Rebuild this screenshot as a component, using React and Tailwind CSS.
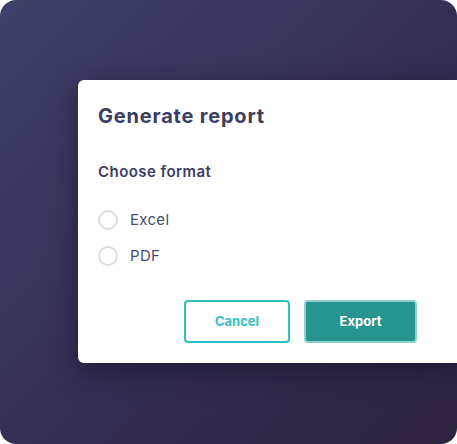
import React, { useState } from 'react';

const formats = ['Excel', 'PDF'];

export default function App() {
    const [format, setFormat] = useState(null);

    return (
        <div className="w-[457px] h-[444px] bg-white">
            <div
                className="w-full h-full rounded-2xl overflow-hidden bg-gradient-to-br from-[#3e4069] via-[#352f55] to-[#2e2340] pt-20 pl-[78px]"
                style={{ fontFamily: 'Inter, "Noto Sans", sans-serif' }}
            >
                <div className="bg-white rounded-l-md h-[283px] shadow-[0_8px_28px_rgba(20,14,40,0.55)] pl-5 pr-10 pt-[22px] flex flex-col">
                    <h2 className="text-[20px] leading-7 font-bold tracking-[0.04em] text-[#3b3d63]">Generate report</h2>

                    <p className="mt-[32px] text-[15px] leading-5 font-semibold tracking-[0.03em] text-[#3b3d63]">Choose format</p>

                    <div className="mt-[28px] flex flex-col gap-4">
                        {formats.map((f) => (
                            <label key={f} className="flex items-center gap-3 cursor-pointer">
                                <input
                                    type="radio"
                                    name="format"
                                    className="sr-only"
                                    checked={format === f}
                                    onChange={() => setFormat(f)}
                                />
                                <span className="w-5 h-5 rounded-full border-2 border-[#d9dee4] flex items-center justify-center">
                                    {format === f && <span className="w-2.5 h-2.5 rounded-full bg-[#26958f]" />}
                                </span>
                                <span className="text-[15px] leading-5 tracking-[0.02em] text-[#4a4c6a]">{f}</span>
                            </label>
                        ))}
                    </div>

                    <div className="mt-auto mb-5 flex justify-end gap-[14px]">
                        <button className="w-[106px] h-[43px] rounded border-2 border-[#2ebfbf] text-[#35bfc0] text-[13px] font-bold">
                            Cancel
                        </button>
                        <button className="w-[113px] h-[43px] rounded bg-[#26958f] border-2 border-[#8fd0cc] text-white text-[13px] font-bold">
                            Export
                        </button>
                    </div>
                </div>
            </div>
        </div>
    );
}
